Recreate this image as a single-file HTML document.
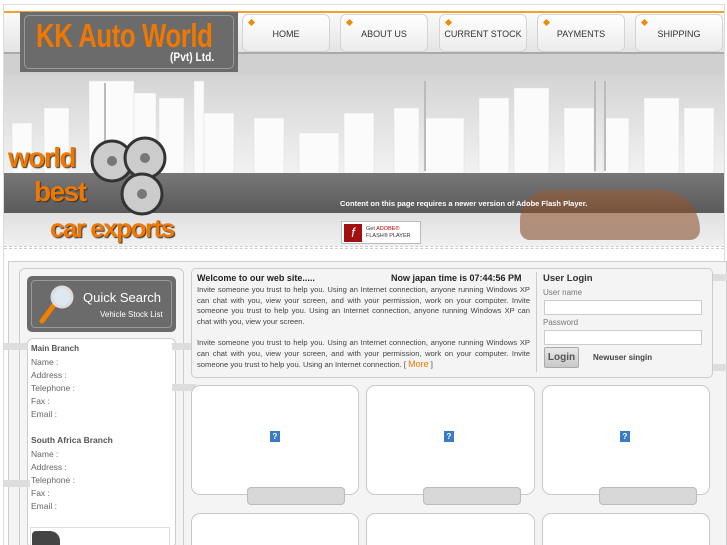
<!DOCTYPE html>
<html style="width:727px;height:545px;overflow:hidden"><head><style>
*{margin:0;padding:0;box-sizing:border-box}
body{width:727px;height:545px;overflow:hidden;background:#fff;font-family:"Liberation Sans",sans-serif;position:relative}
.a{position:absolute}
.nav{background:linear-gradient(#fff,#ececec);border:1px solid #d4d4d4;border-radius:6px;font-size:9px;color:#333;text-align:center;line-height:38px}
.nav i{position:absolute;left:6px;top:5px;width:5px;height:5px;background:#f08a00;transform:rotate(45deg)}
.txt{font-size:7.6px;color:#444;line-height:10.5px;text-align:justify}
.lbl{font-size:8.5px;color:#666;position:absolute;left:31px}
.pb{border:1px solid #c8c8c8;border-radius:9px;background:#fff}
.pl{background:#d8d8d8;border:1px solid #bbb;border-radius:4px}
.q{width:10px;height:11px;background:#3a7cc8;color:#fff;font-size:8px;text-align:center;line-height:11px;font-weight:bold}
</style></head><body>
<div class="a" style="left:3px;top:4px;width:722px;height:541px;border:1px solid #ddd;border-bottom:none"></div>
<div class="a" style="left:4px;top:11px;width:720px;height:43px;background:linear-gradient(#fafafa,#e4e4e4);border-top:2px solid #f0a030;border-bottom:2px solid #aaa"></div>
<div class="a" style="left:4px;top:54px;width:720px;height:20px;background:#d0d0d0"></div>
<div class="a" style="left:20px;top:12px;width:218px;height:60px;background:#6b6b6b"></div>
<div class="a" style="left:24px;top:15px;width:210px;height:54px;border:1px solid #999;border-radius:5px"></div>
<div class="a" style="left:36px;top:17px;font-size:33px;font-weight:bold;color:#f07800;letter-spacing:-0.5px;transform:scaleX(0.78);transform-origin:left;white-space:nowrap">KK Auto World</div>
<div class="a" style="left:170px;top:50px;font-size:12px;font-weight:bold;color:#fff;transform:scaleX(.85);transform-origin:left">(Pvt) Ltd.</div>
<div class="a nav" style="left:242px;top:14px;width:88px;height:38px"><i></i>HOME</div>
<div class="a nav" style="left:340px;top:14px;width:88px;height:38px"><i></i>ABOUT US</div>
<div class="a nav" style="left:439px;top:14px;width:88px;height:38px"><i></i>CURRENT STOCK</div>
<div class="a nav" style="left:537px;top:14px;width:88px;height:38px"><i></i>PAYMENTS</div>
<div class="a nav" style="left:635px;top:14px;width:88px;height:38px"><i></i>SHIPPING</div>
<div class="a" style="left:4px;top:74px;width:720px;height:100px;background:linear-gradient(#d4d4d4,#f2f2f2)"></div>
<svg class="a" style="left:4px;top:78px" width="720" height="96">
<g fill="#fbfbfb" stroke="#ddd" stroke-width="0.5">
<rect x="40" y="30" width="25" height="66"/><rect x="85" y="3" width="45" height="93"/><rect x="130" y="15" width="22" height="81"/><rect x="155" y="20" width="25" height="76"/><rect x="190" y="3" width="10" height="93"/><rect x="200" y="35" width="30" height="61"/><rect x="250" y="40" width="30" height="56"/><rect x="295" y="55" width="40" height="41"/><rect x="340" y="35" width="30" height="61"/><rect x="390" y="30" width="25" height="66"/><rect x="420" y="40" width="40" height="56"/><rect x="475" y="20" width="30" height="76"/><rect x="510" y="10" width="35" height="86"/><rect x="560" y="30" width="30" height="66"/><rect x="600" y="40" width="25" height="56"/><rect x="640" y="20" width="35" height="76"/><rect x="680" y="30" width="30" height="66"/><rect x="8" y="45" width="20" height="51"/></g>
<g fill="#bbb"><rect x="100" y="5" width="2" height="90"/><rect x="420" y="3" width="2" height="90"/><rect x="590" y="3" width="2" height="90"/><rect x="600" y="3" width="2" height="90"/></g></svg>
<div class="a" style="left:4px;top:173px;width:720px;height:40px;background:linear-gradient(#777,#5a5a5a)"></div>
<div class="a" style="left:4px;top:213px;width:720px;height:33px;background:linear-gradient(#e0e0e0,#f0f0f0)"></div>
<div class="a" style="left:520px;top:190px;width:180px;height:50px;border-radius:30px 40px 10px 10px;background:linear-gradient(#a05a30,#7a4020);opacity:.55"></div>
<div class="a" style="left:340px;top:199px;font-size:7.5px;font-weight:bold;color:#fff">Content on this page requires a newer version of Adobe Flash Player.</div>
<div class="a" style="left:341px;top:221px;width:80px;height:23px;background:#fff;border:1px solid #bbb"><div style="position:absolute;left:2px;top:2px;width:18px;height:18px;background:#a01010;color:#fff;font-size:13px;font-style:italic;text-align:center;line-height:18px">f</div><div style="position:absolute;left:24px;top:4px;font-size:5.5px;line-height:7px;color:#333">Get <span style="color:#c00">ADOBE®</span><br>FLASH® PLAYER</div></div>
<div class="a" style="left:8px;top:142px;font-size:28px;font-weight:bold;color:#f07800;letter-spacing:-1.5px;text-shadow:1px 1px 1px #333">world</div>
<div class="a" style="left:34px;top:176px;font-size:28px;font-weight:bold;color:#f07800;letter-spacing:-1.5px;text-shadow:1px 1px 1px #333">best</div>
<div class="a" style="left:50px;top:213px;font-size:26px;font-weight:bold;color:#f07800;letter-spacing:-1.5px;text-shadow:1px 1px 1px #333">car exports</div>
<svg class="a" style="left:88px;top:134px" width="92" height="84"><g fill="#ccc" stroke="#333" stroke-width="3"><circle cx="24" cy="27" r="20"/><circle cx="57" cy="24" r="20"/><circle cx="54" cy="60" r="20"/></g><g fill="#777"><circle cx="24" cy="27" r="5"/><circle cx="57" cy="24" r="5"/><circle cx="54" cy="60" r="5"/></g></svg>
<div class="a" style="left:4px;top:246px;width:720px;height:3px;border-top:1px dashed #ccc;border-bottom:1px dashed #ccc"></div>
<div class="a" style="left:8px;top:261px;width:719px;height:290px;border:1px solid #ccc;background:#f4f4f4"></div>
<div class="a" style="left:19px;top:268px;width:165px;height:290px;border:1px solid #ccc;border-radius:6px;background:#f4f4f4"></div>
<div class="a" style="left:27px;top:276px;width:149px;height:56px;background:#6b6b6b;border-radius:5px"></div>
<div class="a" style="left:31px;top:280px;width:141px;height:48px;border:1px solid #999;border-radius:4px"></div>
<svg class="a" style="left:36px;top:283px" width="44" height="44"><line x1="6" y1="38" x2="18" y2="22" stroke="#f08000" stroke-width="5" stroke-linecap="round"/><circle cx="26" cy="14" r="10" fill="#dde8f0" stroke="#ddd" stroke-width="3"/></svg>
<div class="a" style="left:83px;top:290px;font-size:13px;color:#fff">Quick Search</div>
<div class="a" style="left:100px;top:310px;font-size:8px;color:#fff">Vehicle Stock List</div>
<div class="a" style="left:27px;top:338px;width:149px;height:210px;border:1px solid #ccc;border-radius:6px;background:#fff"></div>
<div class="a" style="left:4px;top:343px;width:24px;height:7px;background:#ddd"></div>
<div class="a" style="left:172px;top:343px;width:24px;height:7px;background:#ddd"></div>
<div class="a" style="left:172px;top:384px;width:24px;height:7px;background:#ddd"></div>
<div class="a" style="left:4px;top:480px;width:26px;height:7px;background:#ddd"></div>
<div class="a" style="left:706px;top:274px;width:21px;height:7px;background:#ddd"></div>
<div class="a" style="left:706px;top:364px;width:21px;height:7px;background:#ddd"></div>
<div class="lbl" style="top:344px;font-weight:bold;color:#555;font-size:8px">Main Branch</div>
<div class="lbl" style="top:357px">Name :</div><div class="lbl" style="top:370px">Address :</div><div class="lbl" style="top:383px">Telephone :</div><div class="lbl" style="top:396px">Fax :</div><div class="lbl" style="top:409px">Email :</div>
<div class="lbl" style="top:435px;font-weight:bold;color:#555;font-size:8.5px">South Africa Branch</div>
<div class="lbl" style="top:449px">Name :</div><div class="lbl" style="top:462px">Address :</div><div class="lbl" style="top:475px">Telephone :</div><div class="lbl" style="top:488px">Fax :</div><div class="lbl" style="top:501px">Email :</div>
<div class="a" style="left:30px;top:527px;width:140px;height:20px;border:1px solid #ddd;background:#fff"><div style="position:absolute;left:1px;top:3px;width:28px;height:16px;background:#444;border-radius:4px 10px 0 0"></div></div>
<div class="a" style="left:191px;top:268px;width:522px;height:110px;border:1px solid #ccc;border-radius:5px;background:#f4f4f4"></div>
<div class="a" style="left:197px;top:273px;font-size:9px;font-weight:bold;color:#222">Welcome to our web site.....</div>
<div class="a" style="left:391px;top:273px;font-size:9px;font-weight:bold;color:#222">Now japan time is 07:44:56 PM</div>
<div class="a txt" style="left:197px;top:285px;width:333px">Invite someone you trust to help you. Using an Internet connection, anyone running Windows XP can chat with you, view your screen, and with your permission, work on your computer. Invite someone you trust to help you. Using an Internet connection, anyone running Windows XP can chat with you, view your screen.</div>
<div class="a txt" style="left:197px;top:338px;width:333px">Invite someone you trust to help you. Using an Internet connection, anyone running Windows XP can chat with you, view your screen, and with your permission, work on your computer. Invite someone you trust to help you. Using an Internet connection. [ <span style="color:#f07800;font-size:9px">More</span> ]</div>
<div class="a" style="left:536px;top:272px;width:1px;height:100px;background:#ccc"></div>
<div class="a" style="left:543px;top:273px;font-size:9.5px;font-weight:bold;color:#333">User Login</div>
<div class="a" style="left:543px;top:288px;font-size:8px;color:#777">User name</div>
<div class="a" style="left:544px;top:300px;width:158px;height:15px;border:1px solid #ccc;background:#fff"></div>
<div class="a" style="left:543px;top:318px;font-size:8px;color:#777">Password</div>
<div class="a" style="left:544px;top:330px;width:158px;height:15px;border:1px solid #ccc;background:#fff"></div>
<div class="a" style="left:544px;top:347px;width:35px;height:21px;border:1px solid #aaa;border-radius:2px;background:linear-gradient(#e8e8e8,#c8c8c8);font-size:10px;font-weight:bold;color:#555;text-align:center;line-height:19px">Login</div>
<div class="a" style="left:593px;top:353px;font-size:8px;font-weight:bold;color:#444">Newuser singin</div>
<div class="a pb" style="left:191px;top:385px;width:168px;height:110px"></div>
<div class="a pb" style="left:366px;top:385px;width:169px;height:110px"></div>
<div class="a pb" style="left:542px;top:385px;width:168px;height:110px"></div>
<div class="a q" style="left:270px;top:431px">?</div><div class="a q" style="left:444px;top:431px">?</div><div class="a q" style="left:620px;top:431px">?</div>
<div class="a pl" style="left:247px;top:487px;width:98px;height:18px"></div>
<div class="a pl" style="left:423px;top:487px;width:98px;height:18px"></div>
<div class="a pl" style="left:599px;top:487px;width:98px;height:18px"></div>
<div class="a pb" style="left:191px;top:513px;width:168px;height:40px;border-bottom:none;border-radius:9px 9px 0 0"></div>
<div class="a pb" style="left:366px;top:513px;width:169px;height:40px;border-bottom:none;border-radius:9px 9px 0 0"></div>
<div class="a pb" style="left:542px;top:513px;width:168px;height:40px;border-bottom:none;border-radius:9px 9px 0 0"></div>
</body></html>
